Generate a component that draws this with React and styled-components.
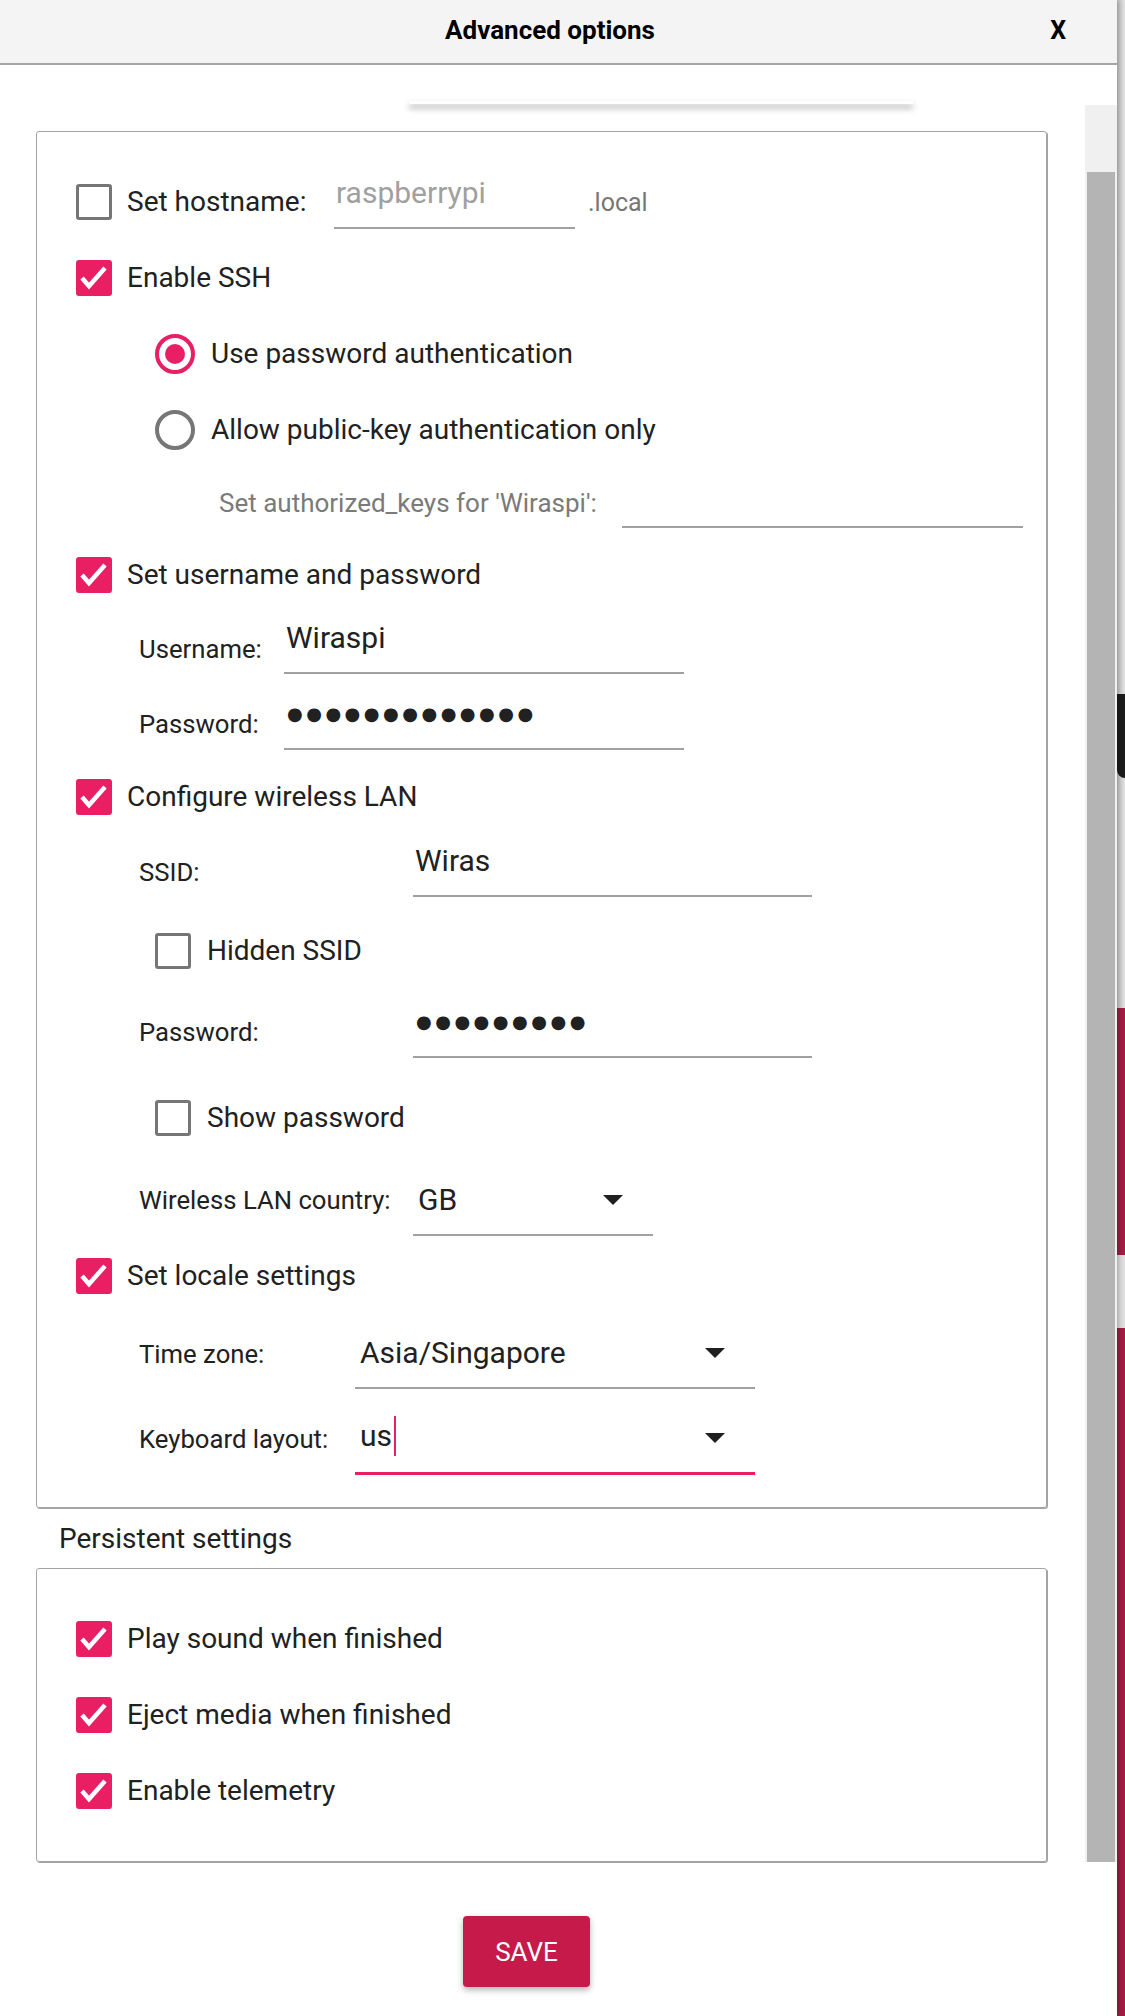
import React from "react";
import styled, { createGlobalStyle } from "styled-components";

const GlobalStyle = createGlobalStyle`
  html, body {
    margin: 0;
    padding: 0;
  }
  body {
    width: 1125px;
    height: 2016px;
    overflow: hidden;
    background: #ffffff;
    font-family: Roboto, "Noto Sans", sans-serif;
    color: #212121;
  }
`;

const PINK = "#e91e63";

const Screen = styled.div`
    display: flex;
    width: 1125px;
    height: 2016px;
`;

const Dialog = styled.div`
    width: 1117px;
    display: flex;
    flex-direction: column;
    background: #ffffff;
    box-shadow: 2px 0 5px rgba(0, 0, 0, 0.25);
    position: relative;
    z-index: 1;
`;

const Header = styled.div`
    height: 63px;
    flex-shrink: 0;
    background: #f4f4f4;
    border-bottom: 2px solid #a6a6a6;
    display: grid;
    grid-template-columns: 1fr auto 1fr;
    align-items: center;
`;

const Title = styled.div`
    grid-column: 2;
    font-weight: 700;
    font-size: 26px;
    color: #000;
    padding-right: 17px;
    margin-top: -3px;
`;

const Close = styled.div`
    justify-self: end;
    margin-right: 51px;
    margin-top: -3px;
    font-weight: 700;
    font-size: 25px;
    color: #000;
`;

const Body = styled.div`
    flex: 1;
    display: flex;
`;

const Content = styled.div`
    width: 1085px;
    padding-left: 36px;
    box-sizing: border-box;
    display: flex;
    flex-direction: column;
    align-items: flex-start;
`;

const ShadowEdge = styled.div`
    margin-top: 36px;
    margin-left: 373px;
    width: 504px;
    height: 3px;
    background: #ffffff;
    box-shadow: 0 4px 6px rgba(0, 0, 0, 0.4);
`;

const Panel = styled.div`
    margin-top: ${props => props.$top}px;
    width: 1011px;
    box-sizing: border-box;
    border: 1px solid #a3a3a3;
    border-radius: 3px;
    box-shadow: 1px 1px 0 #a3a3a3;
    padding: 32px 0 ${props => props.$bottom}px 39px;
    display: flex;
    flex-direction: column;
`;

const Row = styled.div`
    display: flex;
    align-items: center;
    height: ${props => props.$h}px;
    padding-left: ${props => props.$indent || 0}px;
`;

const Box = styled.span`
    width: 36px;
    height: 36px;
    box-sizing: border-box;
    border-radius: 3px;
    flex-shrink: 0;
    background: ${props => props.$checked ? PINK : '#ffffff'};
    border: ${props => props.$checked ? 'none' : '3.5px solid #767676'};
    display: flex;
    align-items: center;
    justify-content: center;
`;

const Radio = styled.span`
    width: 40px;
    height: 40px;
    box-sizing: border-box;
    border-radius: 50%;
    flex-shrink: 0;
    border: 4px solid ${props => props.$checked ? PINK : '#767676'};
    display: flex;
    align-items: center;
    justify-content: center;

    &::after {
        content: "";
        width: 20px;
        height: 20px;
        border-radius: 50%;
        background: ${props => props.$checked ? PINK : 'transparent'};
    }
`;

const MainLabel = styled.span`
    font-size: 28px;
    line-height: 36px;
    margin-left: ${props => props.$gap || 15}px;
    width: ${props => props.$w ? `${props.$w}px` : 'auto'};
    flex-shrink: 0;
    color: #212121;
`;

const SubLabel = styled.span`
    font-size: ${props => props.$muted ? 26 : 25.7}px;
    line-height: 34px;
    width: ${props => props.$w}px;
    flex-shrink: 0;
    color: ${props => props.$muted ? '#7a7a7a' : '#212121'};
`;

const Field = styled.div`
    width: ${props => props.$w}px;
    height: ${props => props.$h}px;
    box-sizing: border-box;
    border-bottom: ${props => props.$focus ? `3px solid ${PINK}` : '2px solid #a0a0a0'};
    display: flex;
    align-items: flex-end;
    padding: 0 ${props => props.$pr || 0}px 16px ${props => props.$pl || 2}px;
    flex-shrink: 0;
`;

const Value = styled.span`
    font-size: 30px;
    line-height: 36px;
    color: ${props => props.$placeholder ? '#a0a0a0' : '#212121'};
    display: flex;
    align-items: center;
`;

const Dots = styled.span`
    font-family: "DejaVu Sans", sans-serif;
    font-size: 18px;
    line-height: 36px;
    letter-spacing: 3.5px;
    color: #212121;
`;

const Caret = styled.span`
    width: 2px;
    height: 40px;
    margin-left: 2px;
    background: ${PINK};
`;

const Arrow = styled.svg`
    margin-left: auto;
    margin-bottom: 13px;
    flex-shrink: 0;
`;

const Suffix = styled.span`
    font-size: 25px;
    color: #767676;
    margin-left: 13px;
`;

const SectionTitle = styled.div`
    margin-top: 13px;
    margin-left: 23px;
    font-size: 28px;
    line-height: 36px;
    color: #212121;
`;

const SaveButton = styled.button`
    margin-top: 54px;
    margin-left: 427px;
    width: 127px;
    height: 71px;
    border: none;
    border-radius: 4px;
    background: #c51a4a;
    color: #ffffff;
    font-family: Roboto, sans-serif;
    font-size: 26px;
    box-shadow: 0 3px 6px rgba(0, 0, 0, 0.3);
    padding: 0;
`;

const ScrollColumn = styled.div`
    width: 32px;
    display: flex;
    flex-direction: column;
`;

const Track = styled.div`
    margin-top: 40px;
    height: 1757px;
    background: #f0f0f0;
    display: flex;
    flex-direction: column;
    padding: 67px 2px 0;
    box-sizing: border-box;
`;

const Thumb = styled.div`
    flex: 1;
    background: #b4b4b4;
`;

const Backdrop = styled.div`
    width: 8px;
    display: flex;
    flex-direction: column;
    background: linear-gradient(to right, #c8c8c8, #e2e2e2);
`;

const BackBlock = styled.div`
    height: ${props => props.$h}px;
    flex-shrink: 0;
    background: ${props => props.$c};
    border-radius: ${props => props.$round ? '0 0 0 40px' : '0'};
`;

const Check = () => (
    <svg width="36" height="36" viewBox="0 0 36 36">
        <polyline points="6,18 13,26 29,8" fill="none" stroke="#fff" strokeWidth="4.5" />
    </svg>
);

const Checkbox = ({ checked }) => (
    <Box $checked={checked}>{checked && <Check />}</Box>
);

const Triangle = () => (
    <Arrow width="20" height="10" viewBox="0 0 20 10">
        <polygon points="0,0 20,0 10,10" fill="#1f1f1f" />
    </Arrow>
);

const CheckRow = ({ h, checked, children }) => (
    <Row $h={h}>
        <Checkbox checked={checked} />
        <MainLabel>{children}</MainLabel>
    </Row>
);

const SubCheckRow = ({ h, children }) => (
    <Row $h={h} $indent={79}>
        <Checkbox checked={false} />
        <MainLabel $gap={16}>{children}</MainLabel>
    </Row>
);

const RadioRow = ({ h, checked, children }) => (
    <Row $h={h} $indent={79}>
        <Radio $checked={checked} />
        <MainLabel $gap={16}>{children}</MainLabel>
    </Row>
);

export default function App() {
    return (
        <>
            <GlobalStyle />
            <Screen>
                <Dialog>
                    <Header>
                        <Title>Advanced options</Title>
                        <Close>X</Close>
                    </Header>
                    <Body>
                        <Content>
                            <ShadowEdge />
                            <Panel $top={27} $bottom={24}>
                                <Row $h={76}>
                                    <Checkbox checked={false} />
                                    <MainLabel $w={207}>Set hostname:</MainLabel>
                                    <Field $w={241} $h={54}>
                                        <Value $placeholder>raspberrypi</Value>
                                    </Field>
                                    <Suffix>.local</Suffix>
                                </Row>
                                <CheckRow h={76} checked>Enable SSH</CheckRow>
                                <RadioRow h={76} checked>Use password authentication</RadioRow>
                                <RadioRow h={75}>Allow public-key authentication only</RadioRow>
                                <Row $h={72} $indent={143}>
                                    <SubLabel $w={403} $muted>Set authorized_keys for 'Wiraspi':</SubLabel>
                                    <Field $w={401} $h={50} />
                                </Row>
                                <CheckRow h={72} checked>Set username and password</CheckRow>
                                <Row $h={75} $indent={63}>
                                    <SubLabel $w={145}>Username:</SubLabel>
                                    <Field $w={400} $h={50}>
                                        <Value>Wiraspi</Value>
                                    </Field>
                                </Row>
                                <Row $h={75} $indent={63}>
                                    <SubLabel $w={145}>Password:</SubLabel>
                                    <Field $w={400} $h={52} $pl={3}>
                                        <Dots>●●●●●●●●●●●●●</Dots>
                                    </Field>
                                </Row>
                                <CheckRow h={72} checked>Configure wireless LAN</CheckRow>
                                <Row $h={77} $indent={63}>
                                    <SubLabel $w={274}>SSID:</SubLabel>
                                    <Field $w={399} $h={50}>
                                        <Value>Wiras</Value>
                                    </Field>
                                </Row>
                                <SubCheckRow h={81}>Hidden SSID</SubCheckRow>
                                <Row $h={82} $indent={63}>
                                    <SubLabel $w={274}>Password:</SubLabel>
                                    <Field $w={399} $h={52} $pl={3}>
                                        <Dots>●●●●●●●●●</Dots>
                                    </Field>
                                </Row>
                                <SubCheckRow h={89}>Show password</SubCheckRow>
                                <Row $h={76} $indent={63}>
                                    <SubLabel $w={274}>Wireless LAN country:</SubLabel>
                                    <Field $w={240} $h={72} $pl={5} $pr={30}>
                                        <Value>GB</Value>
                                        <Triangle />
                                    </Field>
                                </Row>
                                <CheckRow h={75} checked>Set locale settings</CheckRow>
                                <Row $h={81} $indent={63}>
                                    <SubLabel $w={216}>Time zone:</SubLabel>
                                    <Field $w={400} $h={70} $pl={5} $pr={30}>
                                        <Value>Asia/Singapore</Value>
                                        <Triangle />
                                    </Field>
                                </Row>
                                <Row $h={89} $indent={63}>
                                    <SubLabel $w={216}>Keyboard layout:</SubLabel>
                                    <Field $w={400} $h={72} $pl={5} $pr={30} $focus>
                                        <Value>us<Caret /></Value>
                                        <Triangle />
                                    </Field>
                                </Row>
                            </Panel>
                            <SectionTitle>Persistent settings</SectionTitle>
                            <Panel $top={11} $bottom={32}>
                                <CheckRow h={76} checked>Play sound when finished</CheckRow>
                                <CheckRow h={76} checked>Eject media when finished</CheckRow>
                                <CheckRow h={76} checked>Enable telemetry</CheckRow>
                            </Panel>
                            <SaveButton>SAVE</SaveButton>
                        </Content>
                        <ScrollColumn>
                            <Track>
                                <Thumb />
                            </Track>
                        </ScrollColumn>
                    </Body>
                </Dialog>
                <Backdrop>
                    <BackBlock $h={694} $c="transparent" />
                    <BackBlock $h={84} $c="#1c1c1c" $round />
                    <BackBlock $h={230} $c="transparent" />
                    <BackBlock $h={247} $c="#a61b44" />
                    <BackBlock $h={73} $c="#e0e0e0" />
                    <BackBlock $h={688} $c="#a61b44" />
                </Backdrop>
            </Screen>
        </>
    );
}
